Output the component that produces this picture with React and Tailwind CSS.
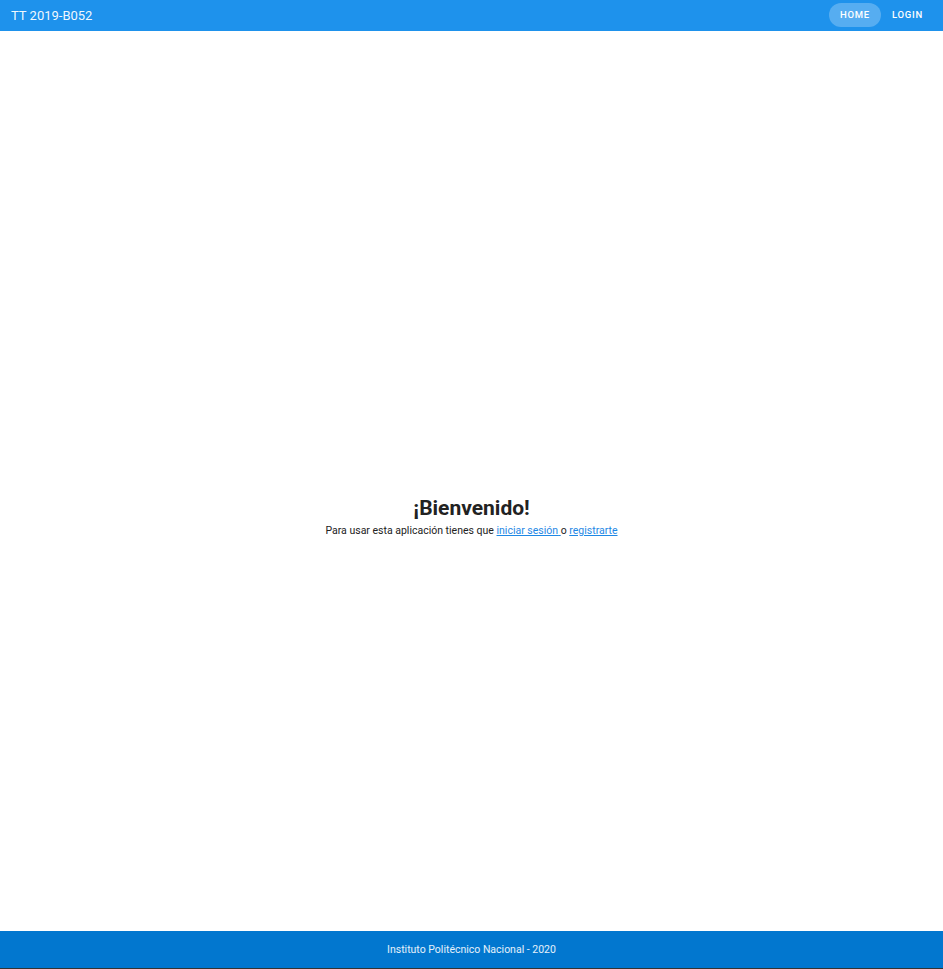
import React from "react";

const NavButton = ({ label, active }) => (
  <button
    type="button"
    className={`h-6 px-[11px] rounded-full text-[9.5px] font-medium tracking-[0.08em] text-white ${
      active ? "bg-white/25" : ""
    }`}
  >
    {label}
  </button>
);

export default function App() {
  return (
    <div
      className="min-h-screen flex flex-col bg-white"
      style={{ fontFamily: "Roboto, 'Liberation Sans', sans-serif" }}
    >
      {/* Top bar */}
      <header className="h-[31px] bg-[#1e92ec] flex items-center justify-between pl-[11px] pr-[9px]">
        <span className="text-[13px] text-white/95">TT 2019-B052</span>
        <nav className="flex items-center -mt-[1px]">
          <NavButton label="HOME" active />
          <NavButton label="LOGIN" />
        </nav>
      </header>

      {/* Main */}
      <main className="flex-1 flex flex-col items-center pt-[465px]">
        <h1 className="text-[21px] leading-[25px] font-bold text-[#222]">¡Bienvenido!</h1>
        <p className="text-[10.5px] leading-[16px] text-[#222] mt-[2px]">
          Para usar esta aplicación tienes que{" "}
          <a href="#" className="text-[#1e88e5] underline">
            iniciar sesión{" "}
          </a>{" "}
          o{" "}
          <a href="#" className="text-[#1e88e5] underline">
            registrarte
          </a>
        </p>
      </main>

      {/* Footer */}
      <footer className="h-[38px] bg-[#0277cf] border-b border-[#333] flex items-center justify-center">
        <span className="text-[10.5px] text-white/90">Instituto Politécnico Nacional - 2020</span>
      </footer>
    </div>
  );
}
